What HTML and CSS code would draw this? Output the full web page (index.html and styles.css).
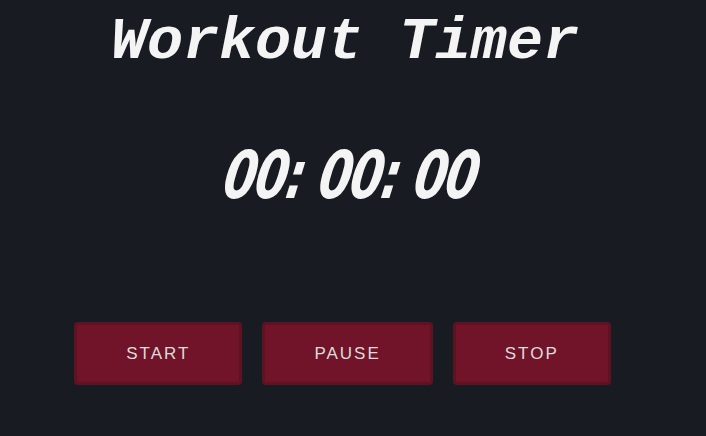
FILE: index.html
```html
<!DOCTYPE html>
<html>
<head>
<meta charset="utf-8">
<link rel="stylesheet" href="styles.css">
</head>
<body>
<main class="app">
  <h1 class="title">Workout Timer</h1>
  <div class="clock">00: 00: 00</div>
  <div class="controls">
    <button class="btn">START</button>
    <button class="btn">PAUSE</button>
    <button class="btn">STOP</button>
  </div>
</main>
</body>
</html>
```
FILE: styles.css
```css
html, body {
  margin: 0;
  padding: 0;
  background: #181b22;
  height: 100%;
}
.app {
  width: 690px;
  display: flex;
  flex-direction: column;
  align-items: center;
}
.title {
  margin: 12px 0 0 0;
  font-family: "Liberation Mono", "Courier New", monospace;
  font-weight: bold;
  font-style: italic;
  font-size: 60px;
  line-height: 60px;
  color: #f4f4f4;
}
.clock {
  margin: 72px 0 0 12px;
  font-family: "DejaVu Sans Condensed", "DejaVu Sans", sans-serif;
  font-weight: bold;
  font-style: italic;
  font-size: 66px;
  line-height: 64px;
  color: #f4f4f4;
  letter-spacing: -2px;
  transform: scaleX(0.8) skewX(-12deg);
}
.controls {
  margin-top: 114px;
  display: flex;
  gap: 20px;
  padding-right: 5px;
}
.btn {
  font-family: "Liberation Sans", Arial, sans-serif;
  font-size: 17px;
  letter-spacing: 2px;
  color: #dcdcdc;
  background: #721429;
  border: 3px solid #5e1222;
  border-radius: 4px;
  padding: 0 49px;
  height: 63px;
}
```
